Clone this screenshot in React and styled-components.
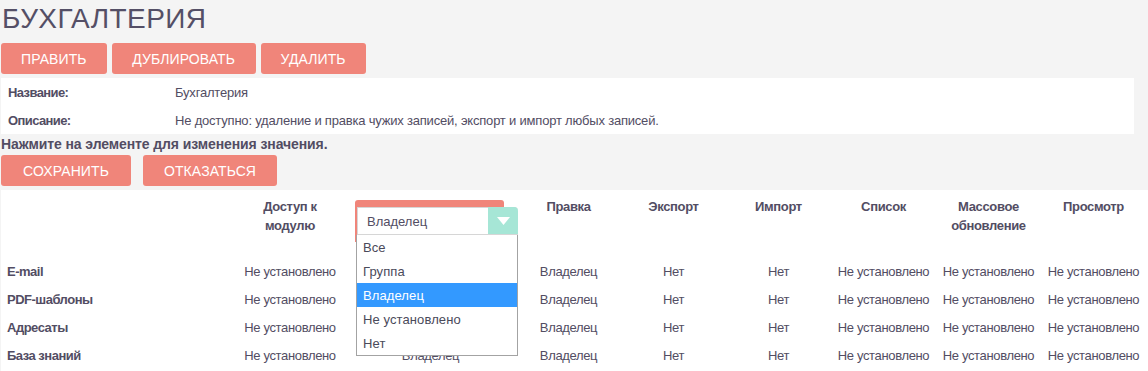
import styled, { createGlobalStyle } from 'styled-components'

const GlobalStyle = createGlobalStyle`
    body {
        margin: 0;
        background: #f4f4f4;
        font-family: "Liberation Sans", Arial, sans-serif;
        color: #524d63;
        overflow: hidden;
    }
`

const SALMON = '#f0857a'

const Page = styled.div`
    padding: 0 0 0 1px;
`

const Title = styled.h1`
    margin: 0 0 0 1px;
    font-size: 28px;
    line-height: 37px;
    font-weight: normal;
    letter-spacing: 0.4px;
    color: #544f66;
`

const ButtonRow = styled.div`
    display: flex;
    gap: ${p => p.gap || 5}px;
    margin: ${p => p.top || 0}px 0 4px;
`

const Button = styled.button`
    height: 31px;
    padding: 0 ${p => p.pad || 20}px;
    border: none;
    border-radius: 3px;
    background: ${SALMON};
    color: #fff;
    font-family: "Liberation Sans", Arial, sans-serif;
    font-size: 14px;
    text-transform: uppercase;
    letter-spacing: 0.1px;
    cursor: pointer;
`

const InfoBox = styled.div`
    width: 1133px;
    background: #fff;
`

const InfoRow = styled.div`
    display: grid;
    grid-template-columns: 167px 1fr;
    height: 28px;
    align-items: center;
    padding-left: 7px;
    font-size: 13px;
    letter-spacing: -0.2px;
`

const InfoLabel = styled.span`
    font-weight: bold;
    letter-spacing: -0.6px;
`

const Hint = styled.div`
    font-size: 14px;
    font-weight: bold;
    line-height: 21px;
    letter-spacing: -0.1px;
`

const Table = styled.div`
    background: #fff;
    display: grid;
    grid-template-columns: 234px 110px 171px repeat(6, 105px);
    padding-bottom: 6px;
    font-size: 13px;
    letter-spacing: -0.35px;
`

const HeadCell = styled.div`
    position: relative;
    height: 67px;
    padding: 7px 6px 0;
    box-sizing: border-box;
    text-align: center;
    font-weight: bold;
    line-height: 19px;
`

const Cell = styled.div`
    height: 28px;
    display: flex;
    align-items: center;
    justify-content: ${p => (p.label ? 'flex-start' : 'center')};
    padding-left: ${p => (p.label ? '6px' : '0')};
    font-weight: ${p => (p.label ? 'bold' : 'normal')};
    letter-spacing: ${p => (p.label ? '-0.5px' : '-0.35px')};
    white-space: nowrap;
`

// open select over the header cell of the second column
const Editor = styled.div`
    position: absolute;
    left: 10px;
    top: 10px;
    width: 163px;
    z-index: 2;
    text-align: left;
    font-weight: normal;
    letter-spacing: 0;
`

const EditorBack = styled.div`
    position: absolute;
    left: 0;
    top: 0;
    width: 149px;
    height: 42px;
    background: ${SALMON};
    border-radius: 3px 3px 0 0;
`

const Select = styled.div`
    position: relative;
    margin: 7px 0 0 2px;
    height: 28px;
    display: flex;
    background: #fff;
    border: 1px solid #d6d6d6;
    border-right: none;
    box-sizing: border-box;
    border-radius: 0 4px 0 0;
`

const SelectValue = styled.div`
    flex: 1;
    padding-left: 9px;
    display: flex;
    align-items: center;
    font-size: 13px;
`

const Arrow = styled.div`
    width: 30px;
    margin: -1px 0 0;
    background: #a6e6d6;
    border-radius: 0 4px 0 0;
    display: flex;
    align-items: center;
    justify-content: center;
`

const List = styled.ul`
    position: relative;
    list-style: none;
    margin: 0 0 0 1px;
    padding: 0;
    width: 162px;
    box-sizing: border-box;
    background: #fff;
    border: 1px solid #a3a3a3;
    border-top: none;
`

const Option = styled.li`
    height: 24px;
    display: flex;
    align-items: center;
    padding-left: 6px;
    font-size: 13px;
    letter-spacing: 0.1px;
    background: ${p => (p.active ? '#3399ff' : '#fff')};
    color: ${p => (p.active ? '#fff' : '#4a4a5a')};
`

const columns = ['Доступ к модулю', '', 'Правка', 'Экспорт', 'Импорт', 'Список', 'Массовое обновление', 'Просмотр']

const rows = [
    { name: 'E-mail', values: ['Не установлено', 'Владелец', 'Владелец', 'Нет', 'Нет', 'Не установлено', 'Не установлено', 'Не установлено'] },
    { name: 'PDF-шаблоны', values: ['Не установлено', 'Владелец', 'Владелец', 'Нет', 'Нет', 'Не установлено', 'Не установлено', 'Не установлено'] },
    { name: 'Адресаты', values: ['Не установлено', 'Владелец', 'Владелец', 'Нет', 'Нет', 'Не установлено', 'Не установлено', 'Не установлено'] },
    { name: 'База знаний', values: ['Не установлено', 'Владелец', 'Владелец', 'Нет', 'Нет', 'Не установлено', 'Не установлено', 'Не установлено'] },
]

const options = ['Все', 'Группа', 'Владелец', 'Не установлено', 'Нет']

function AccessEditor() {
    return (
        <Editor>
            <EditorBack />
            <Select>
                <SelectValue>Владелец</SelectValue>
                <Arrow>
                    <svg width="13" height="8" viewBox="0 0 13 8">
                        <path d="M0 0 L13 0 L6.5 8 Z" fill="#fff" />
                    </svg>
                </Arrow>
            </Select>
            <List>
                {options.map(o => <Option key={o} active={o === 'Владелец'}>{o}</Option>)}
            </List>
        </Editor>
    )
}

export default function App() {
    return (
        <Page>
            <GlobalStyle />
            <Title>БУХГАЛТЕРИЯ</Title>
            <ButtonRow top={6}>
                <Button>Править</Button>
                <Button pad={20.5}>Дублировать</Button>
                <Button pad={20}>Удалить</Button>
            </ButtonRow>
            <InfoBox>
                <InfoRow><InfoLabel>Название:</InfoLabel><span>Бухгалтерия</span></InfoRow>
                <InfoRow><InfoLabel>Описание:</InfoLabel><span>Не доступно: удаление и правка чужих записей, экспорт и импорт любых записей.</span></InfoRow>
            </InfoBox>
            <Hint>Нажмите на элементе для изменения значения.</Hint>
            <ButtonRow gap={12}>
                <Button pad={22}>Сохранить</Button>
                <Button pad={21}>Отказаться</Button>
            </ButtonRow>
            <Table>
                <HeadCell />
                {columns.map((c, i) => (
                    <HeadCell key={i}>
                        {c === 'Доступ к модулю' ? <>Доступ к<br />модулю</> : c}
                        {i === 1 && <AccessEditor />}
                    </HeadCell>
                ))}
                {rows.map(r => (
                    <>
                        <Cell label key={r.name}>{r.name}</Cell>
                        {r.values.map((v, i) => <Cell key={r.name + i}>{v}</Cell>)}
                    </>
                ))}
            </Table>
        </Page>
    )
}
